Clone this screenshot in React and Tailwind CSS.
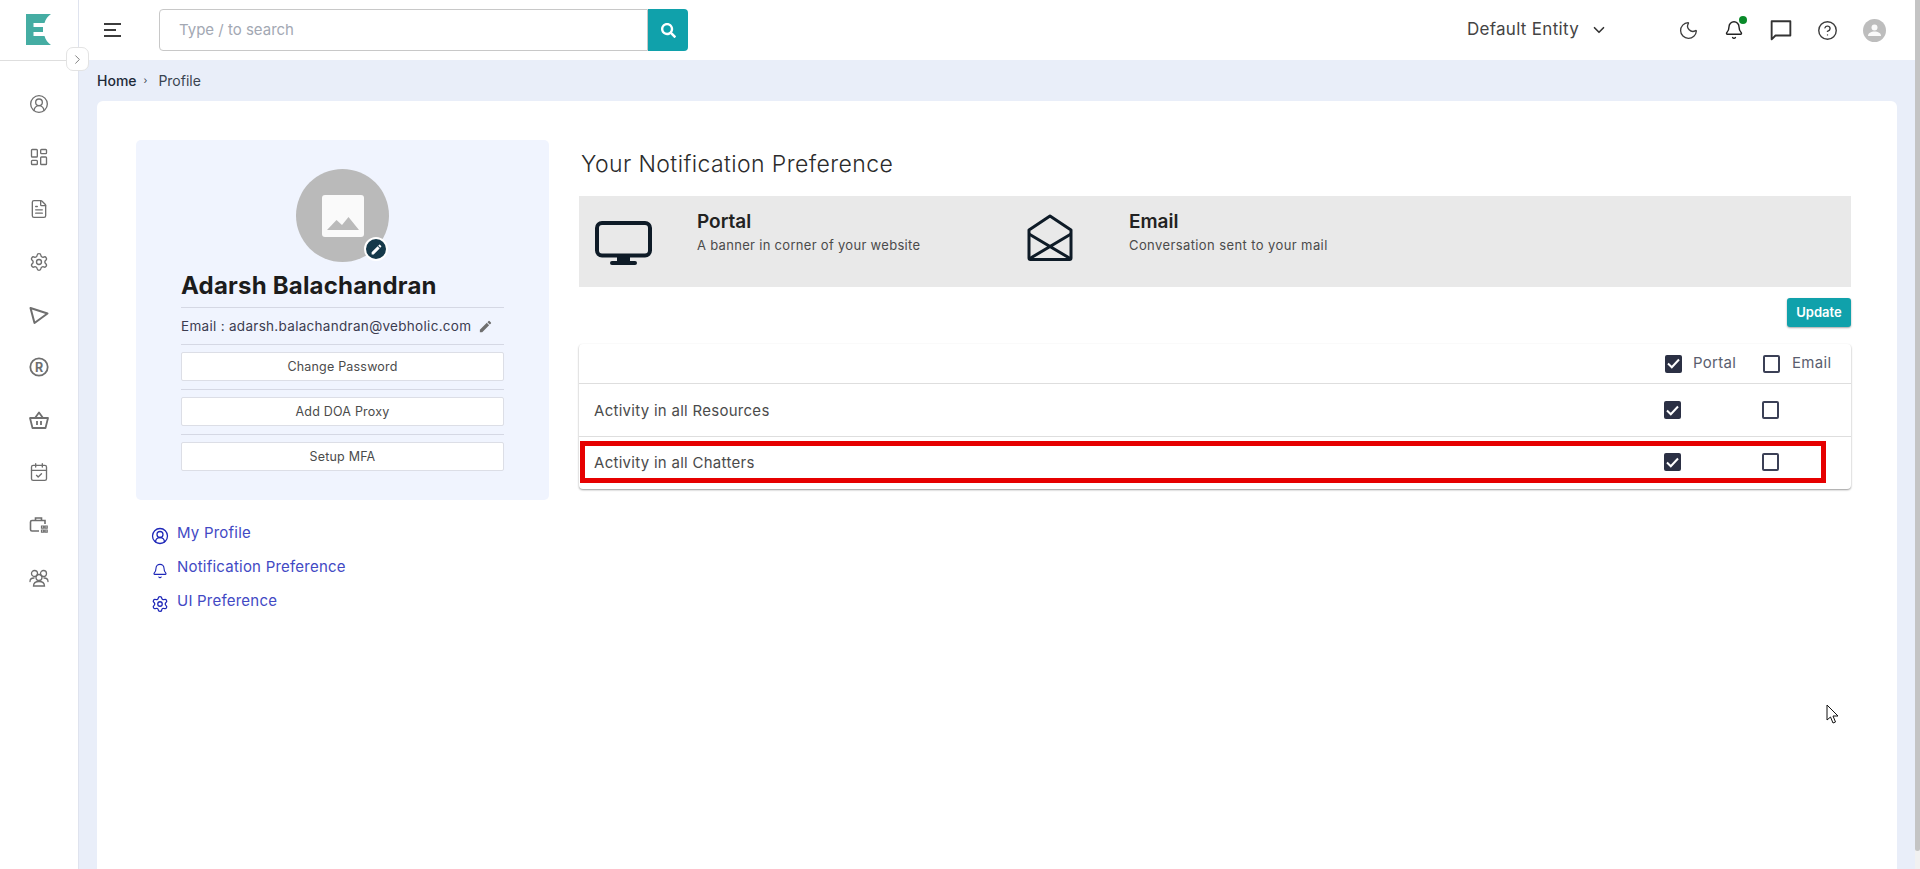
import React from "react";
import { ChevronRight, ChevronDown, Moon, Bell, CircleHelp, CircleUserRound, LayoutDashboard, FileText, Settings, CalendarCheck } from "lucide-react";
import { FaSearch } from "react-icons/fa";
import { MdEdit } from "react-icons/md";

const Logo = () => (
  <svg width="25" height="31" viewBox="0 0 25 31"><path fill="#45ada3" d="M0 0H25C22 2 19.5 5 18.5 9H7.5V13H17V18H7.5V22H18.5C19.5 26 22 29 25 31H0Z" /></svg>
);
const Triangle = (p) => (
  <svg {...p} viewBox="0 0 20 20" fill="none" stroke="currentColor" strokeWidth="2" strokeLinejoin="round"><path d="M1.500 3 18.500 8.500 5.500 18Z" /></svg>
);
const Registered = (p) => (
  <svg {...p} viewBox="0 0 20 20" fill="none"><circle cx="10" cy="10" r="8.700" stroke="currentColor" strokeWidth="1.800" /><text x="10" y="14.500" textAnchor="middle" fontSize="12.500" fontWeight="700" fill="currentColor" stroke="none" fontFamily="Inter, sans-serif">R</text></svg>
);
const Basket = (p) => (
  <svg {...p} viewBox="0 0 20 20" fill="none" stroke="currentColor" strokeWidth="1.800" strokeLinejoin="round"><path d="M1 8H19L16.500 18H3.500Z" /><path d="M6 8 10 2.500 14 8" /><path d="M8 11v4M12 11v4" /></svg>
);
const Case = (p) => (
  <svg {...p} viewBox="0 0 20 20" fill="none" stroke="currentColor" strokeWidth="1.600"><path d="M10 16H3a1.500 1.500 0 0 1-1.500-1.500V7A1.500 1.500 0 0 1 3 5.500H16V9" /><path d="M6.500 5.500V3h6v2.500" /><path strokeWidth="1.200" d="M12.500 11h2.200v2.200h-2.200zM16 11h2.200v2.200H16zM12.500 15h2.200v2.200h-2.200zM16 15h2.200v2.200H16z" /></svg>
);
const Group = (p) => (
  <svg {...p} viewBox="0 0 20 20" fill="none" stroke="currentColor" strokeWidth="1.300" strokeLinecap="round"><circle cx="5.500" cy="5.500" r="3" /><circle cx="14.500" cy="5.500" r="3" /><circle cx="10" cy="9.500" r="3" /><path d="M1 13.500c0-2 1.500-3.500 4-3.500M19 13.500c0-2-1.500-3.500-4-3.500M4.500 18c0-3 2.500-4.500 5.500-4.500s5.500 1.500 5.500 4.500Z" /></svg>
);
const Monitor = () => (
  <svg width="57" height="44" viewBox="0 0 57 44" fill="none"><rect x="2" y="2" width="53" height="32.500" rx="5" stroke="#0e1b27" strokeWidth="4" /><path fill="#0e1b27" d="M22 35h13v5h5a2 2 0 0 1 0 4H17a2 2 0 0 1 0-4h5z" /></svg>
);
const Envelope = () => (
  <svg width="46" height="47" viewBox="0 0 46 47" fill="none" stroke="#0e1b27" strokeWidth="3" strokeLinejoin="round"><path d="M2 16 23 2 44 16V44a1.500 1.500 0 0 1-1.500 1.500H3.500A1.500 1.500 0 0 1 2 44Z" /><path d="M2 20 44 45M44 20 2 45" /></svg>
);
const Chat = (p) => (
  <svg {...p} viewBox="0 0 20 20" fill="none" stroke="currentColor" strokeWidth="1.700" strokeLinejoin="round"><path d="M1.500 2H18.500V15H5L1.500 18.500Z" /></svg>
);
const ImagePlaceholder = () => (
  <svg width="42" height="42" viewBox="0 0 42 42"><rect width="42" height="42" rx="3" fill="#fafafa" /><path fill="#bababa" d="M5 35 14.500 25 20 30 26.500 22 37 35Z" /></svg>
);
const AvatarIcon = () => (
  <svg width="23" height="23" viewBox="0 0 23 23"><circle cx="11.500" cy="11.500" r="11.500" fill="#bdbdbd" /><circle cx="11.500" cy="8.500" r="3" fill="#fafafa" /><path fill="#fafafa" d="M5 17c0-3 3-4.500 6.500-4.500S18 14 18 17Z" /></svg>
);

const Check = ({ on }) =>
  on ? (
    <span className="flex h-[18px] w-[17px] items-center justify-center rounded-[2px] bg-[#2b3044]">
      <svg width="13" height="11" viewBox="0 0 13 11" fill="none" stroke="#fff" strokeWidth="2"><path d="M1 5.500 4.800 9.200 12 1.500" /></svg>
    </span>
  ) : (
    <span className="block h-[18px] w-[17px] rounded-[2px] border-2 border-[#3b4056] bg-white" />
  );

const Row = ({ label, mark, last }) => (
  <div className={"relative flex items-center pl-[15px] text-[15px] text-[#4b4b4b] " + (last ? "h-[52px] pb-[2px]" : "h-[53px] border-b border-[#dedede]")}>
    <span className="flex-1 translate-y-px tracking-[0.28px]">{label}</span>
    <span className="w-[98px]"><Check on /></span>
    <span className="w-[89px]"><Check /></span>
    {mark && <div className="pointer-events-none absolute left-px right-[25px] top-[4px] h-[42px] border-[5px] border-[#e60000]" />}
  </div>
);

const railIcons = [CircleUserRound, LayoutDashboard, FileText, Settings, Triangle, Registered, Basket, CalendarCheck, Case, Group];

const Hr = () => <div className="h-px bg-[#d5d8e4]" />;
const Btn = ({ children }) => (
  <div className="flex h-[29px] items-center justify-center rounded-[2px] border border-[#dcdee6] bg-white pt-[2px] text-[12.500px] tracking-[0.2px] text-[#4b4b4b]">{children}</div>
);

export default function App() {
  return (
    <div className="relative flex h-[869px] w-full overflow-hidden bg-white font-['Inter','Liberation_Sans',sans-serif]">
      <aside className="flex w-[79px] shrink-0 flex-col border-r border-[#dfe3ee] bg-white">
        <div className="flex h-[61px] shrink-0 items-start justify-start border-b border-[#dedede] pl-[26px] pt-[14px]">
          <Logo />
        </div>
        <nav className="flex flex-col items-center pt-[17px] pr-px text-[#6f6f6f]">
          {railIcons.map((I, i) => (
            <div key={i} className="flex h-[52.600px] w-full items-center justify-center">
              <I width="20" height="20" size={20} strokeWidth={1.6} />
            </div>
          ))}
        </nav>
      </aside>
      <div className="absolute left-[66px] top-[47px] z-10 flex h-[24px] w-[23px] items-center justify-center rounded-[7px] border border-[#e3e3e3] bg-white text-[#777]">
        <ChevronRight size={15} strokeWidth={1.5} />
      </div>

      <div className="flex min-w-0 flex-1 flex-col bg-[#e9eef9]">
        <header className="flex h-[60px] shrink-0 items-center bg-white pl-[25px] pr-[17px]">
          <div className="flex h-[14px] w-[17px] flex-col justify-between">
            <span className="h-[2px] w-[17px] bg-[#3c3c3c]" />
            <span className="h-[2px] w-[12px] bg-[#3c3c3c]" />
            <span className="h-[2px] w-[17px] bg-[#3c3c3c]" />
          </div>
          <div className="ml-[38px] flex h-[42px] w-[529px]">
            <div className="flex flex-1 items-center rounded-l-[4px] border border-[#c8c8c8] pl-[19px] text-[15px] text-[#a3a8b3]">Type / to search</div>
            <div className="flex w-[40px] items-center justify-center rounded-r-[4px] bg-[#10a1ab] text-white"><FaSearch size={15} /></div>
          </div>
          <div className="ml-auto flex items-center">
            <span className="text-[17px] tracking-[0.3px] text-[#444]">Default Entity</span>
            <ChevronDown className="ml-[11px] text-[#333]" size={18} strokeWidth={2.2} />
            <div className="ml-[59px] flex items-center text-[#3d3d3d]">
              <span className="flex w-[43px] justify-center"><Moon size={21} strokeWidth={1.5} /></span>
              <span className="relative flex w-[47px] justify-center">
                <Bell size={20} strokeWidth={1.7} className="text-[#222]" />
                <span className="absolute left-[29px] -top-[4px] h-[8px] w-[8px] rounded-full bg-[#0a8a2a]" />
              </span>
              <span className="flex w-[47px] justify-center"><Chat width="22" height="22" className="text-[#333]" /></span>
              <span className="flex w-[47px] justify-center"><CircleHelp size={21} strokeWidth={1.6} /></span>
              <span className="flex w-[47px] justify-center"><AvatarIcon /></span>
            </div>
          </div>
        </header>

        <div className="flex h-[41px] shrink-0 items-center pl-[18px] text-[14px] text-[#3a4450]">
          <span className="font-medium text-[#1d2a38]">Home</span>
          <span className="ml-[7px] text-[10px]">›</span>
          <span className="ml-[11px]">Profile</span>
        </div>

        <main className="ml-[18px] mr-[18px] flex flex-1 gap-[30px] rounded-t-[6px] bg-white pl-[39px] pr-[46px] pt-[39px]">
          <section className="w-[413px] shrink-0">
            <div className="h-[360px] rounded-[5px] bg-[#f0f4fe] px-[45px] pt-[29px]">
              <div className="relative mx-auto flex h-[93px] w-[93px] items-center justify-center rounded-full bg-[#bababa]">
                <ImagePlaceholder />
                <span className="absolute left-[68px] top-[68px] flex h-[24px] w-[24px] items-center justify-center rounded-full border-2 border-white bg-[#16394a] text-white"><MdEdit size={13} /></span>
              </div>
              <h2 className="mt-[4px] h-[41px] text-[24px] font-bold leading-[40px] tracking-[0.2px] text-[#1c1c1c]">Adarsh Balachandran</h2>
              <Hr />
              <div className="flex h-[36px] items-center text-[13.500px] tracking-[0.3px] text-[#3c3c50]">
                Email : adarsh.balachandran@vebholic.com
                <MdEdit size={15} className="ml-[7px] text-[#6f6f6f]" />
              </div>
              <Hr />
              <div className="mt-[7px]"><Btn>Change Password</Btn></div>
              <div className="mb-[7px] mt-[8px]"><Hr /></div>
              <Btn>Add DOA Proxy</Btn>
              <div className="mb-[7px] mt-[8px]"><Hr /></div>
              <Btn>Setup MFA</Btn>
            </div>
            <ul className="mt-[20px] flex flex-col pl-[15px] text-[15px] tracking-[0.22px] text-[#4249c4]">
              <li className="flex h-[34px] items-start gap-[8px] pt-[2px]"><CircleUserRound size={18} strokeWidth={1.7} className="mt-[5px] text-[#1e27b8]" /><span>My Profile</span></li>
              <li className="flex h-[34px] items-start gap-[8px] pt-[2px]"><Bell size={16} strokeWidth={1.7} className="ml-px mr-px mt-[7px] text-[#1e27b8]" /><span>Notification Preference</span></li>
              <li className="flex h-[34px] items-start gap-[8px] pt-[2px]"><Settings size={18} strokeWidth={1.7} className="mt-[5px] text-[#1e27b8]" /><span>UI Preference</span></li>
            </ul>
          </section>

          <section className="min-w-0 flex-1">
            <h1 className="ml-[2px] h-[56px] pt-[8px] text-[23px] font-light leading-[32px] tracking-[0.4px] text-[#2b2b2b]">Your Notification Preference</h1>
            <div className="flex h-[91px] items-start bg-[#e9e9e9] pl-[16px]">
              <span className="mt-[25px]"><Monitor /></span>
              <div className="ml-[45px] mt-[14px] w-[330px]">
                <div className="text-[19px] font-semibold leading-[24px] text-[#222]">Portal</div>
                <div className="text-[13px] leading-[22px] tracking-[0.3px] text-[#4b4b4b]">A banner in corner of your website</div>
              </div>
              <span className="mt-[18px]"><Envelope /></span>
              <div className="ml-[56px] mt-[14px]">
                <div className="text-[19px] font-semibold leading-[24px] text-[#222]">Email</div>
                <div className="text-[13px] leading-[22px] tracking-[0.4px] text-[#4b4b4b]">Conversation sent to your mail</div>
              </div>
            </div>
            <div className="mt-[11px] flex justify-end">
              <span className="flex h-[29px] w-[64px] items-center justify-center rounded-[3px] bg-[#10a1ab] text-[13px] font-semibold text-white shadow-[0_1px_2px_rgba(0,0,0,0.35)]">Update</span>
            </div>
            <div className="mt-[17px] rounded-[4px] bg-white shadow-[0_1px_2px_rgba(0,0,0,0.4)]">
              <div className="flex h-[40px] items-center justify-end border-b border-[#dedede] text-[15px] text-[#5a5e6e]">
                <Check on />
                <span className="ml-[11px] w-[70px] tracking-[0.3px]">Portal</span>
                <Check />
                <span className="ml-[12px] w-[59px] tracking-[0.3px]">Email</span>
              </div>
              <Row label="Activity in all Resources" />
              <Row label="Activity in all Chatters" mark last />
            </div>
          </section>
        </main>
      </div>

      <div className="relative w-[5px] shrink-0 bg-[#f1f1f1]">
        <div className="h-[851px] rounded-b-[3px] bg-[#c4c4c4]" />
      </div>

      <svg className="absolute left-[1826px] top-[704px]" width="13" height="20" viewBox="0 0 13 20" fill="#fff" stroke="#111" strokeWidth="1"><path d="M1 1V16L4.500 13 7 19 9.500 18 7 12H12Z" /></svg>
    </div>
  );
}
